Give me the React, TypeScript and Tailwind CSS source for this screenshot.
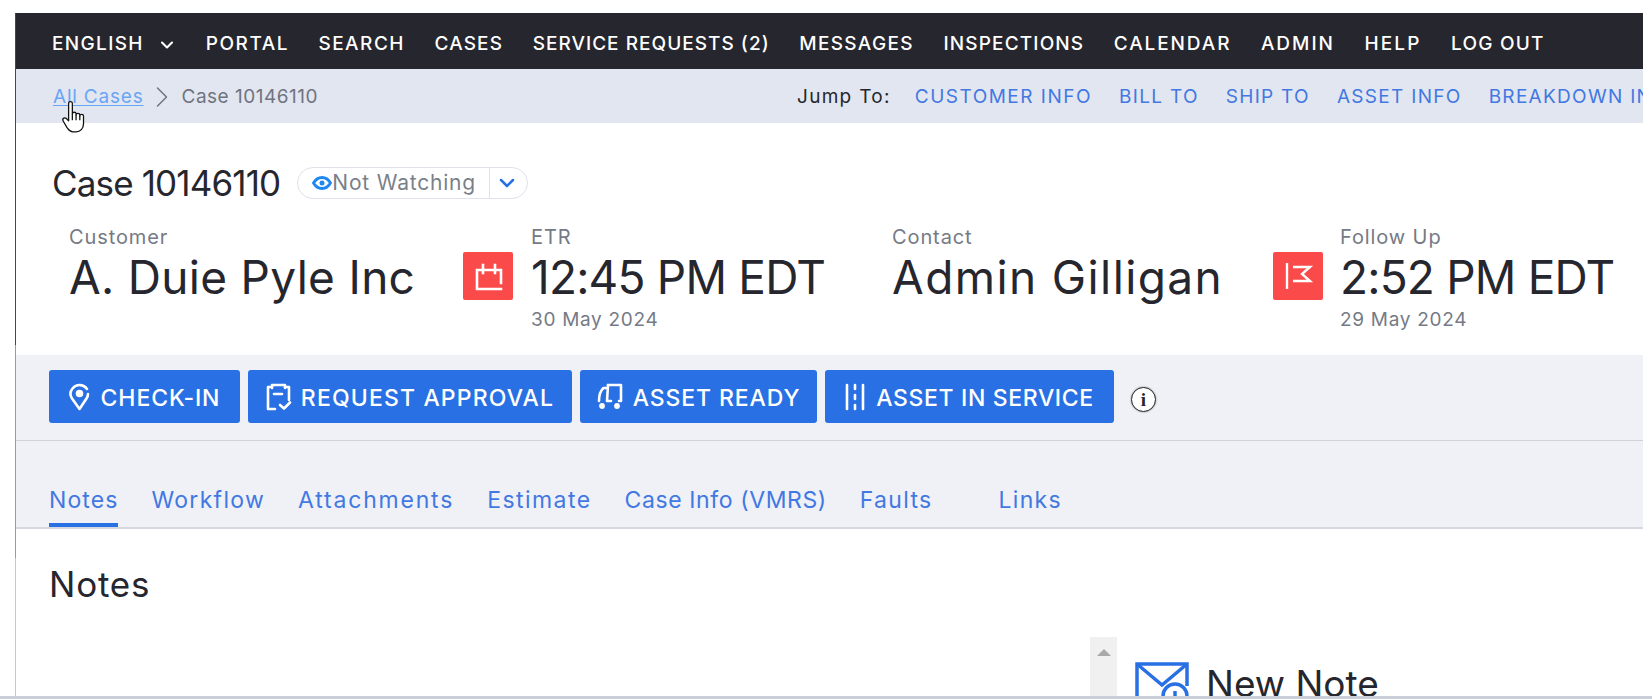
import { ChevronDown, ChevronRight } from 'lucide-react';

const font = { fontFamily: 'Inter, "Liberation Sans", sans-serif' };

const navItems = [
  { label: 'PORTAL', cls: 'tracking-[1.5px]' },
  { label: 'SEARCH', cls: 'tracking-[1.5px]' },
  { label: 'CASES', cls: 'tracking-[1.15px]' },
  { label: 'SERVICE REQUESTS (2)', cls: 'tracking-[1.03px]' },
  { label: 'MESSAGES', cls: 'tracking-[1.35px]' },
  { label: 'INSPECTIONS', cls: 'tracking-[1.15px]' },
  { label: 'CALENDAR', cls: 'tracking-[1.9px]' },
  { label: 'ADMIN', cls: 'tracking-[2px]' },
  { label: 'HELP', cls: 'tracking-[2.15px]' },
  { label: 'LOG OUT', cls: 'tracking-[1.2px]' },
];

const jumpLinks = ['BILL TO', 'SHIP TO', 'ASSET INFO', 'BREAKDOWN INFO'];

const tabs = [
  { label: 'Workflow', cls: 'tracking-[1.3px]' },
  { label: 'Attachments', cls: 'tracking-[1.8px]' },
  { label: 'Estimate', cls: 'tracking-[1.45px]' },
  { label: 'Case Info (VMRS)', cls: 'tracking-[0.6px]' },
  { label: 'Faults', cls: 'tracking-[1.3px]' },
];

function PinIcon() {
  return (
    <svg width="22" height="28" viewBox="0 0 22 28" fill="none" stroke="white" strokeWidth="2.6" strokeLinecap="round" strokeLinejoin="round">
      <path d="M18 6A9 9 0 0 0 3.500 5.500C1 8.500 1 12.500 3 15.500L10.500 26l7-10.500c1-1.500 1.500-3 1.500-4.500" />
      <circle cx="10.500" cy="10.500" r="2.500" fill="white" />
    </svg>
  );
}

function ClipboardIcon() {
  return (
    <svg width="26" height="28" viewBox="0 0 26 28" fill="none" stroke="white" strokeWidth="2.6" strokeLinecap="round" strokeLinejoin="round">
      <path d="M6 4H2v22h7" />
      <path d="M19 4h4v13" />
      <path d="M6 5V2h13v3" />
      <path d="M8 11h8" />
      <path d="M14 22l4 3.500 6-6" />
    </svg>
  );
}

function TruckIcon() {
  return (
    <svg width="26" height="28" viewBox="0 0 26 28" fill="none" stroke="white" strokeWidth="2.6" strokeLinecap="round" strokeLinejoin="round">
      <path d="M11 2h13v16h-2" />
      <path d="M11 2l-1 16h4" />
      <path d="M9 5H6.500C3 8 2 12 2 18" />
      <circle cx="5" cy="23" r="1.600" fill="white" />
      <circle cx="20" cy="23" r="1.600" fill="white" />
    </svg>
  );
}

function RoadIcon() {
  return (
    <svg width="20" height="28" viewBox="0 0 20 28" fill="none" stroke="white" strokeWidth="2.6" strokeLinecap="round">
      <path d="M2 2v24" />
      <path d="M18 2v24" />
      <path d="M10 2v4" />
      <path d="M10 12v4" />
      <path d="M10 22v4" />
    </svg>
  );
}

function HandCursor() {
  return (
    <svg width="28" height="33" viewBox="0 0 26 31" fill="white" stroke="#111" strokeWidth="1.2" strokeLinejoin="round" className="absolute left-[61px] top-[100px]">
      <path d="M7 3c0-2 3.500-2 3.500 0v10c0-2 3.500-2 3.500 0v1c0-2 3.500-2 3.500 0v1c0-2 3.500-2 3.500 0v7c0 5-3 8-7 8h-3c-3 0-4-2-5.500-4L2 20c-1.500-2.500 1-4 3-2.500l2 2z" />
      <path d="M10.500 13v6" fill="none" />
      <path d="M14 14v5" fill="none" />
      <path d="M17.500 15v4" fill="none" />
    </svg>
  );
}

function StatBlock({ label, value, sub, cls }: { label: string; value: string; sub?: string; cls: string }) {
  return (
    <div className="flex flex-col whitespace-nowrap">
      <span className="text-[20px] leading-[22px] tracking-[0.9px] text-[#757a86]">{label}</span>
      <span className={`mt-[4px] text-[46px] leading-[50px] text-[#26262e] ${cls}`}>{value}</span>
      {sub && <span className="mt-[7px] text-[19px] leading-[22px] tracking-[0.7px] text-[#757a86]">{sub}</span>}
    </div>
  );
}

function AlertBox({ children }: { children: React.ReactNode }) {
  return (
    <div className="mt-[26px] h-[48px] w-[50px] shrink-0 self-start rounded-[2px] bg-[#fb4a4a]">
      {children}
    </div>
  );
}

const actionButton =
  'flex h-[53px] items-center justify-center rounded-[3px] bg-[#2870e3] text-[23px] font-medium text-white';

export default function App() {
  return (
    <div className="relative flex h-[700px] w-[1652px] flex-col overflow-hidden bg-white" style={font}>
      <div className="flex min-h-0 flex-1 pl-[15px] pr-[9px] pt-[13px]">
        {/* left edge of the captured window */}
        <div className="flex w-px shrink-0 flex-col">
          <div className="h-[332px] bg-[#45454f]" />
          <div className="h-[213px] bg-[#9a9aa2]" />
          <div className="flex-1 bg-[#c6c8d0]" />
        </div>

        <div className="flex min-w-0 flex-1 flex-col">
          {/* top nav */}
          <nav className="flex h-[56px] shrink-0 items-center whitespace-nowrap bg-[#26262e] pl-[36px] pt-[7px] text-[19px] font-medium tracking-[1.35px] text-white">
            <span className="flex items-center">
              ENGLISH
              <ChevronDown size={20} strokeWidth={2.5} className="ml-[13px]" />
            </span>
            <div className="ml-[29px] flex gap-[29.5px]">
              {navItems.map((item) => (
                <a key={item.label} className={item.cls}>
                  {item.label}
                </a>
              ))}
            </div>
          </nav>

          {/* breadcrumb and jump links */}
          <div className="flex h-[54px] shrink-0 items-center overflow-hidden whitespace-nowrap bg-[#e2e6f0] pl-[37px] pt-[2px] text-[19px]">
            <a className="tracking-[0.8px] text-[#6aa5f5] underline underline-offset-2">All Cases</a>
            <ChevronRight size={36} strokeWidth={1} className="shrink-0 text-[#6f7480]" />
            <span className="ml-[2px] tracking-[0.5px] text-[#6f7480]">Case 10146110</span>
            <div className="ml-[479px] flex shrink-0 items-center tracking-[1.3px]">
              <span className="text-[#26262e]">Jump To:</span>
              <a className="ml-[24px] tracking-[1.5px] text-[#4278e2]">CUSTOMER INFO</a>
              <div className="ml-[27px] flex gap-[27px]">
                {jumpLinks.map((link) => (
                  <a key={link} className="text-[#4278e2]">
                    {link}
                  </a>
                ))}
              </div>
            </div>
          </div>

          {/* case header */}
          <div className="flex h-[232px] shrink-0 flex-col bg-white pl-[36px] pt-[44px]">
            <div className="flex items-center">
              <h1 className="whitespace-nowrap text-[35px] font-normal leading-[32px] tracking-[-0.85px] text-[#26262e]">Case 10146110</h1>
              <div className="ml-[17px] flex h-[32px] items-center rounded-full border border-[#dfe2ea] text-[21px] tracking-[0.8px] text-[#7a7f8a]">
                <div className="flex h-full w-[192px] items-center whitespace-nowrap border-r border-[#dfe2ea] pl-[14px]">
                  <svg width="20" height="14" viewBox="0 0 20 14" fill="none" className="shrink-0">
                    <path d="M1.500 7c2-3.500 5-5.500 8.500-5.500s6.500 2 8.500 5.500c-2 3.500-5 5.500-8.500 5.500S3.500 10.500 1.500 7z" stroke="#1e88f0" strokeWidth="2.800" />
                    <circle cx="10" cy="7" r="2.500" fill="#1e88f0" />
                  </svg>
                  <span>Not Watching</span>
                </div>
                <ChevronDown size={24} strokeWidth={2.5} className="ml-[5px] mr-[8px] text-[#2a70e2]" />
              </div>
            </div>

            <div className="mt-[27px] flex pl-[17px]">
              <div className="w-[394px] shrink-0">
                <StatBlock label="Customer" value="A. Duie Pyle Inc" cls="tracking-[0.3px]" />
              </div>
              <div className="flex w-[429px] shrink-0">
                <AlertBox>
                  <svg width="50" height="48" viewBox="0 0 50 48" fill="none" stroke="white" strokeWidth="2.600" strokeLinecap="square">
                    <path d="M38 37H14V18h24v13" />
                    <path d="M20 13v8" />
                    <path d="M32 13v8" />
                  </svg>
                </AlertBox>
                <div className="ml-[18px]">
                  <StatBlock label="ETR" value="12:45 PM EDT" sub="30 May 2024" cls="tracking-[-0.8px]" />
                </div>
              </div>
              <div className="w-[381px] shrink-0">
                <StatBlock label="Contact" value="Admin Gilligan" cls="tracking-[1.4px]" />
              </div>
              <div className="flex shrink-0">
                <AlertBox>
                  <svg width="50" height="48" viewBox="0 0 50 48" fill="none" stroke="white" strokeWidth="2.400">
                    <path d="M14 11v26" />
                    <path d="M20 15h17l-8 7 8 7H20" />
                  </svg>
                </AlertBox>
                <div className="ml-[17px]">
                  <StatBlock label="Follow Up" value="2:52 PM EDT" sub="29 May 2024" cls="tracking-[-0.8px]" />
                </div>
              </div>
            </div>
          </div>

          {/* actions */}
          <div className="flex h-[86px] shrink-0 items-center gap-[8px] whitespace-nowrap border-b border-[#cfd2da] bg-[#eff1f7] pb-[2px] pl-[33px]">
            <button className={`${actionButton} w-[191px] gap-[10px] tracking-[0.9px]`}>
              <PinIcon />
              <span className="pt-[3px]">CHECK-IN</span>
            </button>
            <button className={`${actionButton} w-[324px] gap-[9px] tracking-[1.15px]`}>
              <ClipboardIcon />
              <span className="pt-[3px]">REQUEST APPROVAL</span>
            </button>
            <button className={`${actionButton} w-[237px] gap-[10px] tracking-[0.9px]`}>
              <TruckIcon />
              <span className="pt-[3px]">ASSET READY</span>
            </button>
            <button className={`${actionButton} w-[289px] gap-[11px] tracking-[0.65px]`}>
              <RoadIcon />
              <span className="pt-[3px]">ASSET IN SERVICE</span>
            </button>
            <span
              className="ml-[9px] mt-[5px] flex h-[25px] w-[25px] items-center justify-center rounded-full border-[1.5px] border-[#26262e] bg-white text-[19px] font-bold leading-none text-[#26262e] shadow-[0_0_2px_#888]"
              style={{ fontFamily: '"Liberation Serif", serif' }}
            >
              i
            </span>
          </div>

          {/* tabs */}
          <div className="flex h-[88px] shrink-0 items-end gap-[33px] whitespace-nowrap border-b-2 border-[#d6d8e0] bg-[#eff1f7] pl-[33px] text-[23px] text-[#4278e2]">
            <a className="border-b-4 border-[#2870e3] pb-[8px] leading-[30px] tracking-[1.1px]">Notes</a>
            {tabs.map((tab) => (
              <a key={tab.label} className={`pb-[12px] leading-[30px] ${tab.cls}`}>
                {tab.label}
              </a>
            ))}
            <a className="ml-[33px] pb-[12px] leading-[30px] tracking-[1.3px]">Links</a>
          </div>

          {/* notes */}
          <div className="min-h-0 flex-1 overflow-hidden bg-white pl-[33px] pt-[36px]">
            <h2 className="text-[35px] font-normal leading-[38px] tracking-[0.8px] text-[#26262e]">Notes</h2>
            <div className="mt-[34px] flex pl-[1041px]">
              <div className="flex h-[60px] w-[27px] shrink-0 justify-center bg-[#f0f0f0] pt-[12px]">
                <div className="h-0 w-0 border-x-[7px] border-b-[7px] border-x-transparent border-b-[#a8a8a8]" />
              </div>
              <div className="ml-[18px] mt-[25px] flex items-start">
                <svg width="54" height="42" viewBox="0 0 54 42" fill="none" stroke="#2870e3" strokeWidth="3.500" className="shrink-0">
                  <path d="M28 36H2V2h50v22" />
                  <path d="M2 2l25 21L52 2" />
                  <circle cx="40" cy="34" r="12" fill="white" />
                  <path d="M40 29v6" />
                </svg>
                <span className="ml-[17px] whitespace-nowrap text-[37px] font-normal leading-[44px] text-[#26262e]">New Note</span>
              </div>
            </div>
          </div>
        </div>
      </div>

      <div className="h-[3px] shrink-0 bg-[#c9ced9]" />
      <div className="h-px shrink-0 bg-white" />

      {/* mouse cursor over the breadcrumb */}
      <HandCursor />
    </div>
  );
}
